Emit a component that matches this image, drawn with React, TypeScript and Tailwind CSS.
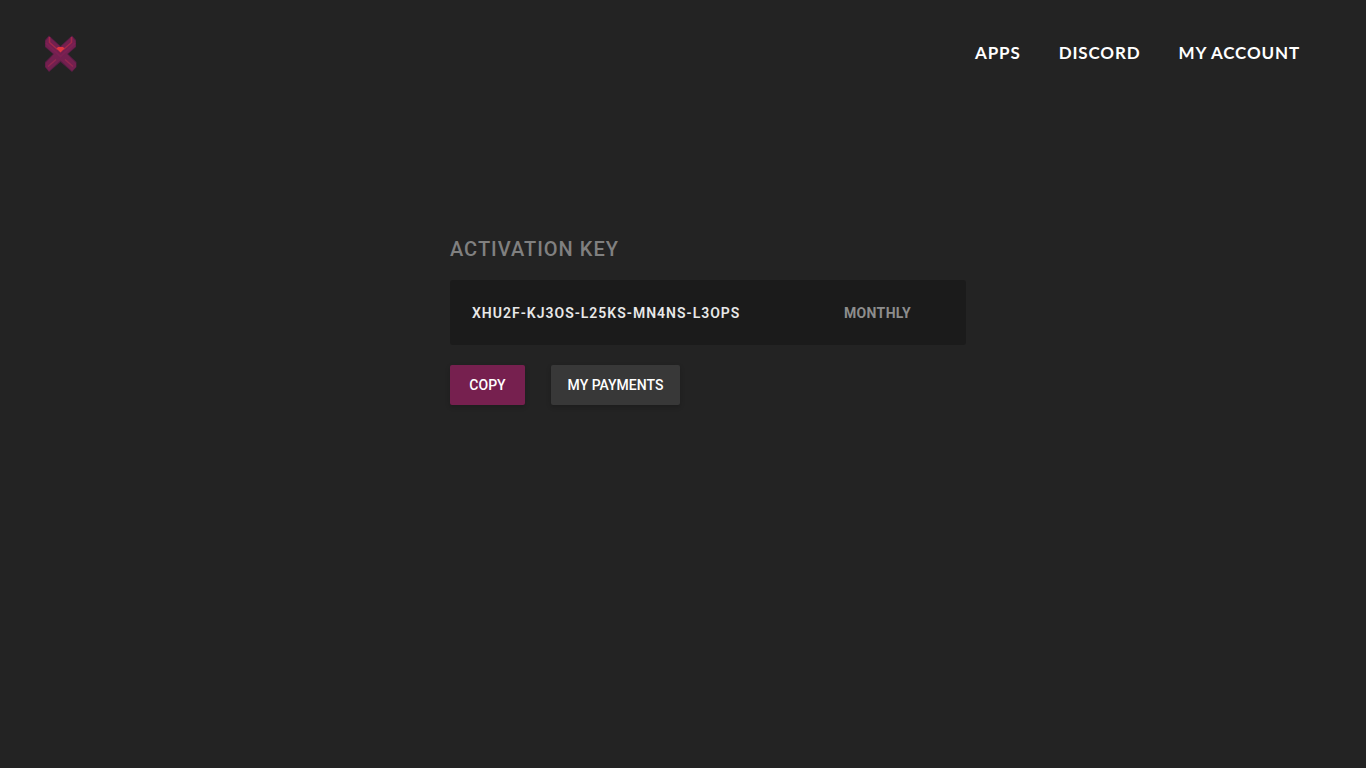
const links = ["APPS", "DISCORD", "MY ACCOUNT"];

function Logo() {
  return (
    <svg viewBox="0 0 32 38" className="h-[38px] w-8" aria-hidden="true">
      <path d="M4 1.500L15.500 12 27 1.500 31 6V13L23 20 31.500 28V33L27 38 15.500 28 4 38 0 33V28L8 20 0 13V6z" fill="#551d43" />
      <path d="M4 2.500L15.500 13 27 2.500 30.500 7V12.500L22 20 31 29V33L27 37 15.500 26.500 4 37 .5 33V29L9 20 .5 12.500V7z" fill="#73204f" />
      <path d="M1 9L15.500 22.500 30 9" fill="none" stroke="#7c2053" strokeWidth="2" />
      <path d="M15.500 14.500L12 15 4.500 8.500V3M15.500 14.500L19 15l7.500-6.500V3" fill="none" stroke="#a3284b" strokeWidth="1.500" />
      <path d="M3 32.500L11 25.500M28 32.500L20 25.500" stroke="#952750" strokeWidth="1.500" />
      <path d="M11.500 14.500L13 13h5l1.500 1.500-4 4z" fill="#e03640" />
    </svg>
  );
}

export default function App() {
  return (
    <div className="min-h-screen bg-[#232323] font-['Roboto',sans-serif] text-white">
      <header className="flex h-[106px] items-center justify-between pr-[66px] pl-[45px]">
        <a href="#" aria-label="Home">
          <Logo />
        </a>
        <nav className="flex gap-[38px] font-['Lato',sans-serif] text-[17px] leading-6 font-bold tracking-wider">
          {links.map((label) => (
            <a key={label} href="#">
              {label}
            </a>
          ))}
        </nav>
      </header>
      <main className="pt-32 pl-[50px]">
        <section className="mx-auto max-w-[516px]">
          <h1 className="text-xl leading-[30px] font-medium tracking-[1px] text-[#808080]">ACTIVATION KEY</h1>
          <div className="mt-4 flex h-[65px] items-center justify-between rounded-[3px] bg-[#1b1b1b] pr-[55px] pl-[22px] text-sm">
            <span className="font-semibold tracking-[1px] text-[#e8e8e8]">XHU2F-KJ3OS-L25KS-MN4NS-L3OPS</span>
            <span className="font-bold tracking-wide text-[#8d8d8d]">MONTHLY</span>
          </div>
          <div className="mt-5 flex gap-[26px] text-sm font-medium">
            <button type="button" className="h-10 w-[75px] rounded-[2px] bg-[#76204f] shadow-[0_2px_5px_rgba(0,0,0,0.2)]">
              COPY
            </button>
            <button type="button" className="h-10 w-[129px] rounded-[2px] bg-[#383838] shadow-[0_2px_5px_rgba(0,0,0,0.2)]">
              MY PAYMENTS
            </button>
          </div>
        </section>
      </main>
    </div>
  );
}
